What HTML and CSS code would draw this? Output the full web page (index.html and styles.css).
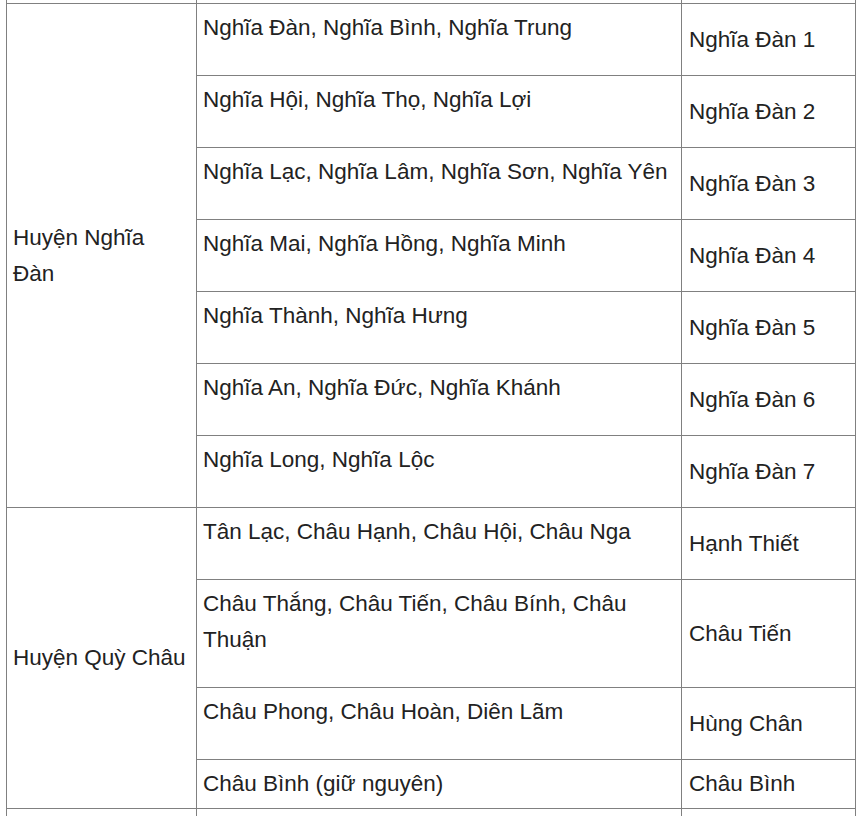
FILE: index.html
```html
<!DOCTYPE html>
<html lang="vi">
<head>
<meta charset="utf-8">
<title>Bảng</title>
<link rel="stylesheet" href="styles.css">
</head>
<body>
<table class="grid">
  <colgroup>
    <col class="c1"><col class="c2"><col class="c3">
  </colgroup>
  <tr class="prev"><td></td><td></td><td></td></tr>
  <tr>
    <td rowspan="7">Huyện Nghĩa Đàn</td>
    <td><p>Nghĩa Đàn, Nghĩa Bình, Nghĩa Trung</p></td>
    <td class="name">Nghĩa Đàn 1</td>
  </tr>
  <tr><td><p>Nghĩa Hội, Nghĩa Thọ, Nghĩa Lợi</p></td><td class="name">Nghĩa Đàn 2</td></tr>
  <tr><td><p>Nghĩa Lạc, Nghĩa Lâm, Nghĩa Sơn, Nghĩa Yên</p></td><td class="name">Nghĩa Đàn 3</td></tr>
  <tr><td><p>Nghĩa Mai, Nghĩa Hồng, Nghĩa Minh</p></td><td class="name">Nghĩa Đàn 4</td></tr>
  <tr><td><p>Nghĩa Thành, Nghĩa Hưng</p></td><td class="name">Nghĩa Đàn 5</td></tr>
  <tr><td><p>Nghĩa An, Nghĩa Đức, Nghĩa Khánh</p></td><td class="name">Nghĩa Đàn 6</td></tr>
  <tr><td><p>Nghĩa Long, Nghĩa Lộc</p></td><td class="name">Nghĩa Đàn 7</td></tr>
  <tr>
    <td rowspan="4">Huyện Quỳ Châu</td>
    <td><p>Tân Lạc, Châu Hạnh, Châu Hội, Châu Nga</p></td>
    <td class="name">Hạnh Thiết</td>
  </tr>
  <tr><td><p>Châu Thắng, Châu Tiến, Châu Bính, Châu Thuận</p></td><td class="name">Châu Tiến</td></tr>
  <tr><td><p>Châu Phong, Châu Hoàn, Diên Lãm</p></td><td class="name">Hùng Chân</td></tr>
  <tr><td>Châu Bình (giữ nguyên)</td><td class="name">Châu Bình</td></tr>
  <tr class="next"><td>&nbsp;</td><td>&nbsp;</td><td class="name">&nbsp;</td></tr>
</table>
</body>
</html>
```

FILE: styles.css
```css
html, body {
  margin: 0;
  padding: 0;
  background: #ffffff;
}

body {
  padding-left: 6px;
  font-family: "Liberation Sans", Arial, sans-serif;
  font-size: 22.5px;
  line-height: 36px;
  color: #222222;
}

.grid {
  border-collapse: collapse;
  width: 850px;
  table-layout: fixed;
}

.c1 { width: 190px; }
.c2 { width: 485px; }
.c3 { width: 174px; }

.grid td {
  border: 1px solid #808080;
  padding: 6px 7px 6px 6px;
  vertical-align: middle;
}

.grid td.name {
  padding-left: 7px;
}

.grid td p {
  margin: 0 0 23px;
}

.grid .prev td {
  border-top: none;
  padding: 0;
  height: 3px;
}
```
